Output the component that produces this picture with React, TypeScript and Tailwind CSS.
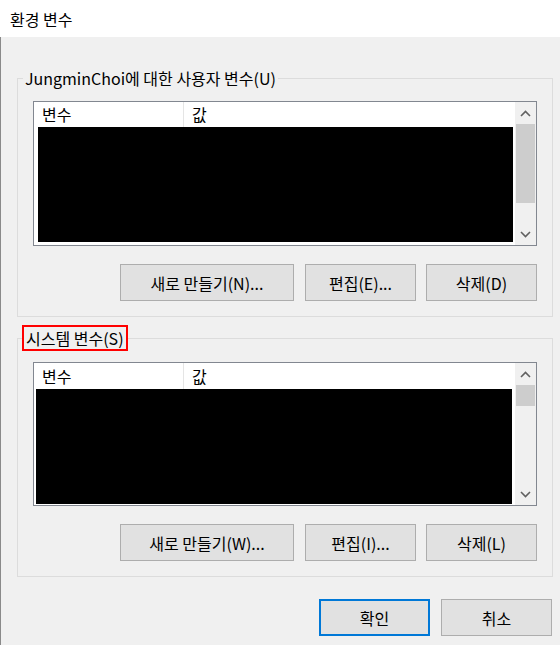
import React from "react";

const FONT = { fontFamily: '"Noto Sans CJK KR", "Noto Sans", sans-serif' };

function Chevron({ up }: { up?: boolean }) {
  return (
    <svg width="11" height="7" viewBox="0 0 11 7" className="block">
      <path
        d={up ? "M1 6 L5.5 1.5 L10 6" : "M1 1 L5.5 5.5 L10 1"}
        fill="none"
        stroke="#606060"
        strokeWidth="1.6"
      />
    </svg>
  );
}

function ListBox({
  blackLeft,
  blackRight,
  thumbH,
  headerH,
  boxH,
}: {
  blackLeft: number;
  blackRight: number;
  thumbH: number;
  headerH: number;
  boxH: number;
}) {
  return (
    <div className="w-[504px] border border-[#828790] bg-white flex" style={{ height: boxH }}>
      <div className="flex-1 flex flex-col min-w-0">
        <div className="flex text-[16px] text-black" style={{ height: headerH, lineHeight: headerH + "px" }}>
          <div className="w-[150px] pl-[8px] border-r border-[#e5e5e5]">변수</div>
          <div className="pl-[8px]">값</div>
        </div>
        <div className="flex-1 flex">
          <div style={{ width: blackLeft }} />
          <div className="bg-black h-[115px]" style={{ width: blackRight - blackLeft }} />
        </div>
      </div>
      <div className="w-[22px] bg-[#f0f0f0] flex flex-col items-center border-l border-white">
        <div className="h-[22px] flex items-center justify-center">
          <Chevron up />
        </div>
        <div className="w-[19px] bg-[#cdcdcd]" style={{ height: thumbH }} />
        <div className="flex-1" />
        <div className="h-[22px] flex items-center justify-center">
          <Chevron />
        </div>
      </div>
    </div>
  );
}

function Btn({ w, children, focus }: { w: string; children: React.ReactNode; focus?: boolean }) {
  return (
    <div
      className={
        "h-[37px] bg-[#e1e1e1] flex items-center justify-center text-[16px] text-black " +
        w +
        (focus ? " border-2 border-[#0078d7]" : " border border-[#adadad]")
      }
    >
      {children}
    </div>
  );
}

export default function App() {
  return (
    <div className="w-[560px] h-[645px] bg-[#f0f0f0] flex flex-col overflow-hidden" style={FONT}>
      <div className="h-[37px] bg-white pl-[10px] flex items-center text-[16px] text-black">환경 변수</div>
      <div className="flex-1 border-l border-[#8a8a8a] flex flex-col">
        {/* Group 1 */}
        <div className="relative mt-[41px] ml-[16px] w-[536px] h-[239px] border border-[#dcdcdc] pt-[22px] pl-[15px]">
          <div className="absolute left-[5px] top-[-12px] px-[2px] bg-[#f0f0f0] text-[16px] leading-[22px] text-black">
            JungminChoi에 대한 사용자 변수(U)
          </div>
          <ListBox blackLeft={4} blackRight={479} thumbH={79} headerH={25} boxH={145} />
          <div className="mt-[18px] w-[504px] flex justify-end">
            <Btn w="w-[174px]">새로 만들기(N)...</Btn>
            <div className="w-[11px]" />
            <Btn w="w-[111px]">편집(E)...</Btn>
            <div className="w-[10px]" />
            <Btn w="w-[111px]">삭제(D)</Btn>
          </div>
        </div>
        {/* Group 2 */}
        <div className="relative mt-[21px] ml-[16px] w-[536px] h-[239px] border border-[#dcdcdc] pt-[22px] pl-[15px]">
          <div className="absolute left-[4px] top-[-14px] px-[2px] border-2 border-[#ff0000] bg-[#f0f0f0] text-[16px] leading-[22px] text-black">
            시스템 변수(S)
          </div>
          <div className="h-[1px]" />
          <ListBox blackLeft={2} blackRight={478} thumbH={21} headerH={26} boxH={144} />
          <div className="mt-[18px] w-[504px] flex justify-end">
            <Btn w="w-[174px]">새로 만들기(W)...</Btn>
            <div className="w-[11px]" />
            <Btn w="w-[111px]">편집(I)...</Btn>
            <div className="w-[10px]" />
            <Btn w="w-[111px]">삭제(L)</Btn>
          </div>
        </div>
        <div className="mt-[22px] pr-[8px] flex justify-end">
          <Btn w="w-[111px]" focus>확인</Btn>
          <div className="w-[11px]" />
          <Btn w="w-[111px]">취소</Btn>
        </div>
      </div>
    </div>
  );
}
